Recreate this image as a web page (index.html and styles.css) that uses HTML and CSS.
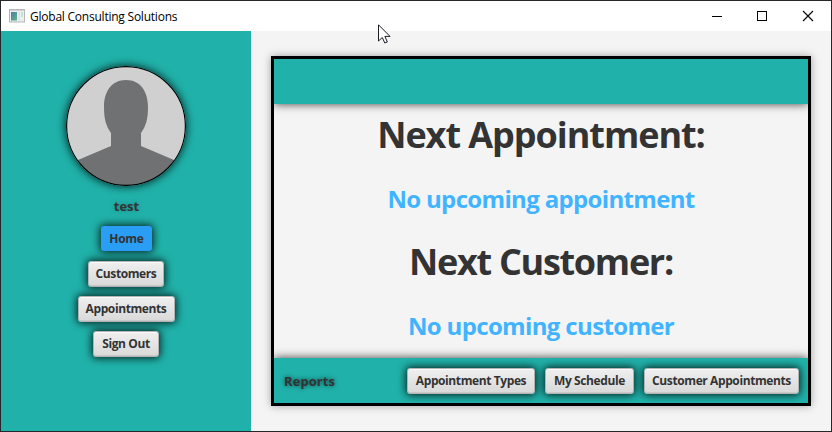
FILE: index.html
```html
<!DOCTYPE html>
<html lang="en">
<head>
<meta charset="utf-8">
<title>Global Consulting Solutions</title>
<link rel="stylesheet" href="styles.css">
</head>
<body>
<div class="window">
  <header class="titlebar">
    <svg class="app-icon" width="16" height="14" viewBox="0 0 16 14">
      <defs><linearGradient id="pane" x1="0" y1="0" x2="1" y2="1"><stop offset="0" stop-color="#4a7fae"/><stop offset="1" stop-color="#5fb383"/></linearGradient></defs>
      <rect x=".5" y=".5" width="15" height="12.5" fill="#eceeef" stroke="#b3b7ba"/>
      <path d="M1 1.5h14" stroke="#cfd3d6"/>
      <rect x="2" y="3" width="6" height="8.5" fill="url(#pane)"/>
      <rect x="9" y="3" width="2" height="8.5" fill="#dfe5e9"/>
      <rect x="12" y="3" width="2" height="5" fill="#c5e3d3"/>
    </svg>
    <span class="title">Global Consulting Solutions</span>
    <svg class="controls" width="110" height="12" viewBox="0 0 110 12" fill="none" stroke="#000">
      <path d="M1 6.5h10"/>
      <rect x="46.500" y="1.500" width="9" height="9"/>
      <path d="M92 1l10 10M102 1l-10 10" stroke-width="1.1"/>
    </svg>
  </header>
  <div class="content">
    <aside class="sidebar">
      <svg class="avatar" width="120" height="120" viewBox="0 0 120 120">
        <defs><clipPath id="round"><circle cx="60" cy="60" r="59.500"/></clipPath></defs>
        <g clip-path="url(#round)">
          <rect width="120" height="120" fill="#d0d0d0"/>
          <path d="M60 14C46 14 38 25 38 41C38 53 40 60 45 67V80L12 94L0 100V120H120V100L108 94L75 80V67C80 60 82 53 82 41C82 25 74 14 60 14Z" fill="#707173"/>
        </g>
        <circle cx="60" cy="60" r="59.400" fill="none" stroke="#000" stroke-width="1.200"/>
      </svg>
      <div class="user"><span>test</span></div>
      <nav class="menu">
        <button class="btn active w-home"><span>Home</span></button>
        <button class="btn w-customers"><span>Customers</span></button>
        <button class="btn w-appointments"><span>Appointments</span></button>
        <button class="btn w-signout"><span>Sign Out</span></button>
      </nav>
    </aside>
    <main class="main">
      <section class="panel">
        <div class="panel-head"></div>
        <div class="panel-body">
          <h1 class="heading appt">Next Appointment:</h1>
          <p class="status status-appt">No upcoming appointment</p>
          <h1 class="heading cust">Next Customer:</h1>
          <p class="status status-cust">No upcoming customer</p>
        </div>
        <footer class="panel-foot">
          <span class="reports">Reports</span>
          <button class="btn w-types"><span>Appointment Types</span></button>
          <button class="btn w-schedule"><span>My Schedule</span></button>
          <button class="btn w-custappt"><span>Customer Appointments</span></button>
        </footer>
      </section>
    </main>
  </div>
  <svg class="cursor" width="13" height="21" viewBox="0 0 13 21">
    <path d="M.5 .8V17L4.300 13.500L6.800 19L9.300 18L6.900 12.400H12Z" fill="#fff" stroke="#1c1c28"/>
  </svg>
</div>
</body>
</html>
```

FILE: styles.css
```css
* { box-sizing: border-box; }
body {
  margin: 0;
  font-family: "Open Sans", "Noto Sans", sans-serif;
  color: #333;
}
.window {
  position: relative;
  width: 832px;
  height: 432px;
  border: 1px solid #26272b;
  background: #f4f4f4;
  display: flex;
  flex-direction: column;
  overflow: hidden;
}
.titlebar {
  height: 30px;
  flex: none;
  background: #fff;
  display: flex;
  align-items: center;
  padding: 0 18px 0 8px;
}
.app-icon { margin-top: -1px; }
.title {
  margin-left: 5px;
  font-size: 12px;
  letter-spacing: -0.23px;
  color: #000;
  white-space: nowrap;
}
.controls { margin-left: auto; margin-right: -8px; }
.content { flex: 1; display: flex; min-height: 0; }
.sidebar {
  width: 250px;
  background: #20b2aa;
  display: flex;
  flex-direction: column;
  align-items: center;
  padding-top: 35px;
}
.avatar {
  border-radius: 50%;
  box-shadow: 0 0 10px rgba(0, 0, 0, 0.9);
  flex: none;
}
.user {
  height: 19px;
  margin: 11px 0 0 1px;
  font: bold 13px/19px "Open Sans", sans-serif;
  text-shadow: 0 0 5px rgba(0, 0, 0, 0.25);
}
.menu {
  margin-top: 10px;
  display: flex;
  flex-direction: column;
  align-items: center;
  gap: 9px;
}
.btn {
  height: 26px;
  padding: 0;
  flex: none;
  border: 1px solid #b4b4b4;
  border-radius: 3px;
  background: linear-gradient(#efefef, #d9d9d9);
  box-shadow: 0 0 9px 1px rgba(0, 0, 0, 0.85), inset 0 1px 0 #fafafa, inset 0 -1px 0 #c8c8c8;
  font: bold 12px/23px "Open Sans", sans-serif;
  letter-spacing: -0.4px;
  color: #333;
  white-space: nowrap;
  display: flex;
  justify-content: center;
}
.active {
  height: 25px;
  margin: 0 0 1px 1px;
  border: 0;
  background: #2a9df4;
  box-shadow: 0 0 9px 1px rgba(0, 0, 0, 0.85);
  letter-spacing: -0.3px;
  line-height: 25px;
}
.w-home { width: 51px; }
.w-customers { width: 76px; }
.w-appointments { width: 97px; }
.w-signout { width: 66px; }
.w-types { width: 128px; }
.w-schedule { width: 89px; }
.w-custappt { width: 155px; }
.main { flex: 1; padding: 25px 20px; }
.panel {
  width: 540px;
  height: 350px;
  border: 3px solid #000;
  box-shadow: 0 0 8px rgba(0, 0, 0, 0.35);
  display: flex;
  flex-direction: column;
}
.panel-head {
  height: 45px;
  flex: none;
  background: #20b2aa;
  box-shadow: 0 0 9px rgba(0, 0, 0, 0.75);
  clip-path: inset(0 0 -12px 0);
}
.panel-body {
  flex: 1;
  display: flex;
  flex-direction: column;
  align-items: center;
  white-space: nowrap;
}
.heading {
  margin: 7px 0 0;
  font-size: 36px;
  line-height: 48px;
  font-weight: 700;
}
.status {
  margin: 24px 0 0;
  font-size: 24px;
  line-height: 32px;
  font-weight: 700;
  color: #42b4ff;
}
.appt { letter-spacing: -1.05px; }
.cust { margin-top: 23px; letter-spacing: -1.3px; }
.status-appt { letter-spacing: -0.66px; }
.status-cust { letter-spacing: -0.65px; }
.panel-foot {
  height: 45px;
  flex: none;
  background: #20b2aa;
  box-shadow: 0 0 9px rgba(0, 0, 0, 0.75);
  clip-path: inset(-12px 0 0 0);
  display: flex;
  align-items: center;
  gap: 10px;
  padding: 0 9px 0 10px;
}
.reports {
  margin-right: auto;
  font-size: 13px;
  font-weight: 700;
  letter-spacing: 0.08px;
  text-shadow: 0 0 5px rgba(0, 0, 0, 0.6);
}
.cursor { position: absolute; left: 377px; top: 23px; }
```
